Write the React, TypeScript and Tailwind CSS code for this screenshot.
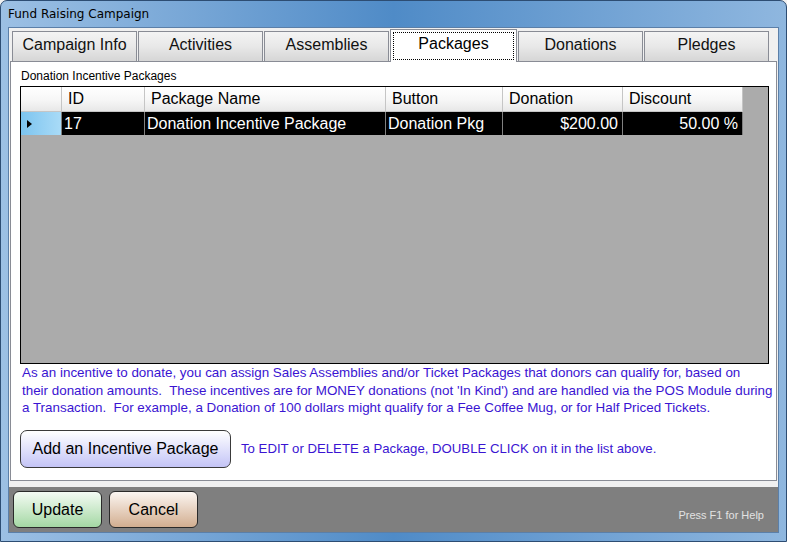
import React from "react";

const tabs = ["Campaign Info", "Activities", "Assemblies", "Packages", "Donations", "Pledges"];

const cols = [
  { name: "ID", w: "w-[83px]", value: "17", right: false },
  { name: "Package Name", w: "w-[241px]", value: "Donation Incentive Package", right: false },
  { name: "Button", w: "w-[117px]", value: "Donation Pkg", right: false },
  { name: "Donation", w: "w-[120px]", value: "$200.00", right: true },
  { name: "Discount", w: "w-[120px]", value: "50.00 %", right: true },
];

function Tab({ label, active }: { label: string; active: boolean }) {
  if (active) {
    return (
      <div className="relative z-10 w-[127px] h-[33px] -mb-[1px] border border-b-0 border-[#898c95] bg-white p-[2px]">
        <div className="h-full border border-dotted border-black flex items-start justify-center text-[16px] leading-[22px] text-black">
          {label}
        </div>
      </div>
    );
  }
  return (
    <div className="w-[125px] h-[30px] pb-[3px] border border-b-0 border-[#898c95] bg-gradient-to-b from-[#f4f4f4] via-[#e8e8e8] to-[#d6d6d6] flex items-center justify-center text-[16px] text-[#111]">
      {label}
    </div>
  );
}

export default function App() {
  return (
    <div
      className="w-[787px] h-[542px] overflow-hidden bg-[#f0f0f0]"
      style={{ fontFamily: '"Liberation Sans", Arial, sans-serif' }}
    >
      <div className="w-full h-full flex flex-col rounded-t-[7px] border border-[#2d4d73] bg-gradient-to-r from-[#9cc0e4] via-[#4f8bc7] to-[#8fb7df]">
        {/* title bar */}
        <div className="h-[26px] flex items-center pl-[7px] text-[12px] text-black" style={{ fontFamily: '"DejaVu Sans", sans-serif' }}>
          Fund Raising Campaign
        </div>

        {/* client */}
        <div className="flex-1 mx-[7px] mb-[8px] flex flex-col border border-[#5b7fa8] bg-[#f0f0f0]">
          <div className="flex-1 flex flex-col pl-[1px] pr-[1px] pb-[6px]">
            {/* tab strip */}
            <div className="flex items-end gap-[1px] pl-[2px] h-[33px]">
              {tabs.map((t) => (
                <Tab key={t} label={t} active={t === "Packages"} />
              ))}
            </div>

            {/* tab panel */}
            <div className="flex-1 border border-[#898c95] bg-white px-[9px] pt-[6px] flex flex-col">
              <div className="text-[12px] text-black leading-[16px] pl-[1px]">Donation Incentive Packages</div>

              {/* grid */}
              <div className="mt-[2px] h-[278px] w-[749px] border border-black bg-[#ababab]">
                <div className="flex h-[25px] bg-gradient-to-b from-white via-[#f7f7f7] to-[#e6e6e6] w-[722px]">
                  <div className="w-[41px] border-r border-b border-[#c5c5c5]" />
                  {cols.map((c) => (
                    <div
                      key={c.name}
                      className={`${c.w} border-r border-b border-[#c5c5c5] flex items-center pl-[6px] text-[16px] text-black`}
                    >
                      {c.name}
                    </div>
                  ))}
                </div>
                <div className="flex h-[23px] w-[722px] bg-black">
                  <div className="w-[41px] border-r border-[#808080] bg-gradient-to-r from-[#7cc4ef] to-[#a9dbf7] flex items-center pl-[6px]">
                    <span className="block w-0 h-0 border-y-[4px] border-y-transparent border-l-[5px] border-l-black" />
                  </div>
                  {cols.map((c) => (
                    <div
                      key={c.name}
                      className={`${c.w} border-r border-[#808080] flex items-center text-[16px] text-white ${
                        c.right ? "justify-end pr-[4px]" : "pl-[2px]"
                      }`}
                    >
                      {c.value}
                    </div>
                  ))}
                </div>
              </div>

              <p className="mt-0 pl-[2px] text-[13.4px] leading-[17.5px] text-[#3a14d2] whitespace-nowrap">
                As an incentive to donate, you can assign Sales Assemblies and/or Ticket Packages that donors can qualify for, based on
                <br />
                their donation amounts.&nbsp; These incentives are for MONEY donations (not 'In Kind') and are handled via the POS Module during
                <br />
                a Transaction.&nbsp; For example, a Donation of 100 dollars might qualify for a Fee Coffee Mug, or for Half Priced Tickets.
              </p>

              <div className="mt-[13px] flex items-center gap-[10px]">
                <button className="w-[211px] h-[38px] rounded-[7px] border border-[#3a3a3a] bg-gradient-to-b from-white to-[#c4c4f6] text-[16px] text-black">
                  Add an Incentive Package
                </button>
                <span className="text-[13.2px] text-[#3a14d2]">
                  To EDIT or DELETE a Package, DOUBLE CLICK on it in the list above.
                </span>
              </div>
            </div>
          </div>

          {/* bottom bar */}
          <div className="h-[45px] bg-[#7f7f7f] flex items-center pl-[4px] pr-[14px] gap-[7px]">
            <button className="w-[89px] h-[37px] rounded-[6px] border border-[#2a2a2a] bg-gradient-to-b from-[#f4fbf4] to-[#a4d8a4] text-[16px] text-black">
              Update
            </button>
            <button className="w-[89px] h-[37px] rounded-[6px] border border-[#2a2a2a] bg-gradient-to-b from-[#fbf6f2] to-[#d2ae90] text-[16px] text-black">
              Cancel
            </button>
            <span className="ml-auto self-end mb-[9px] text-[11px] text-[#e2e2e2]">Press F1 for Help</span>
          </div>
        </div>
      </div>
    </div>
  );
}
